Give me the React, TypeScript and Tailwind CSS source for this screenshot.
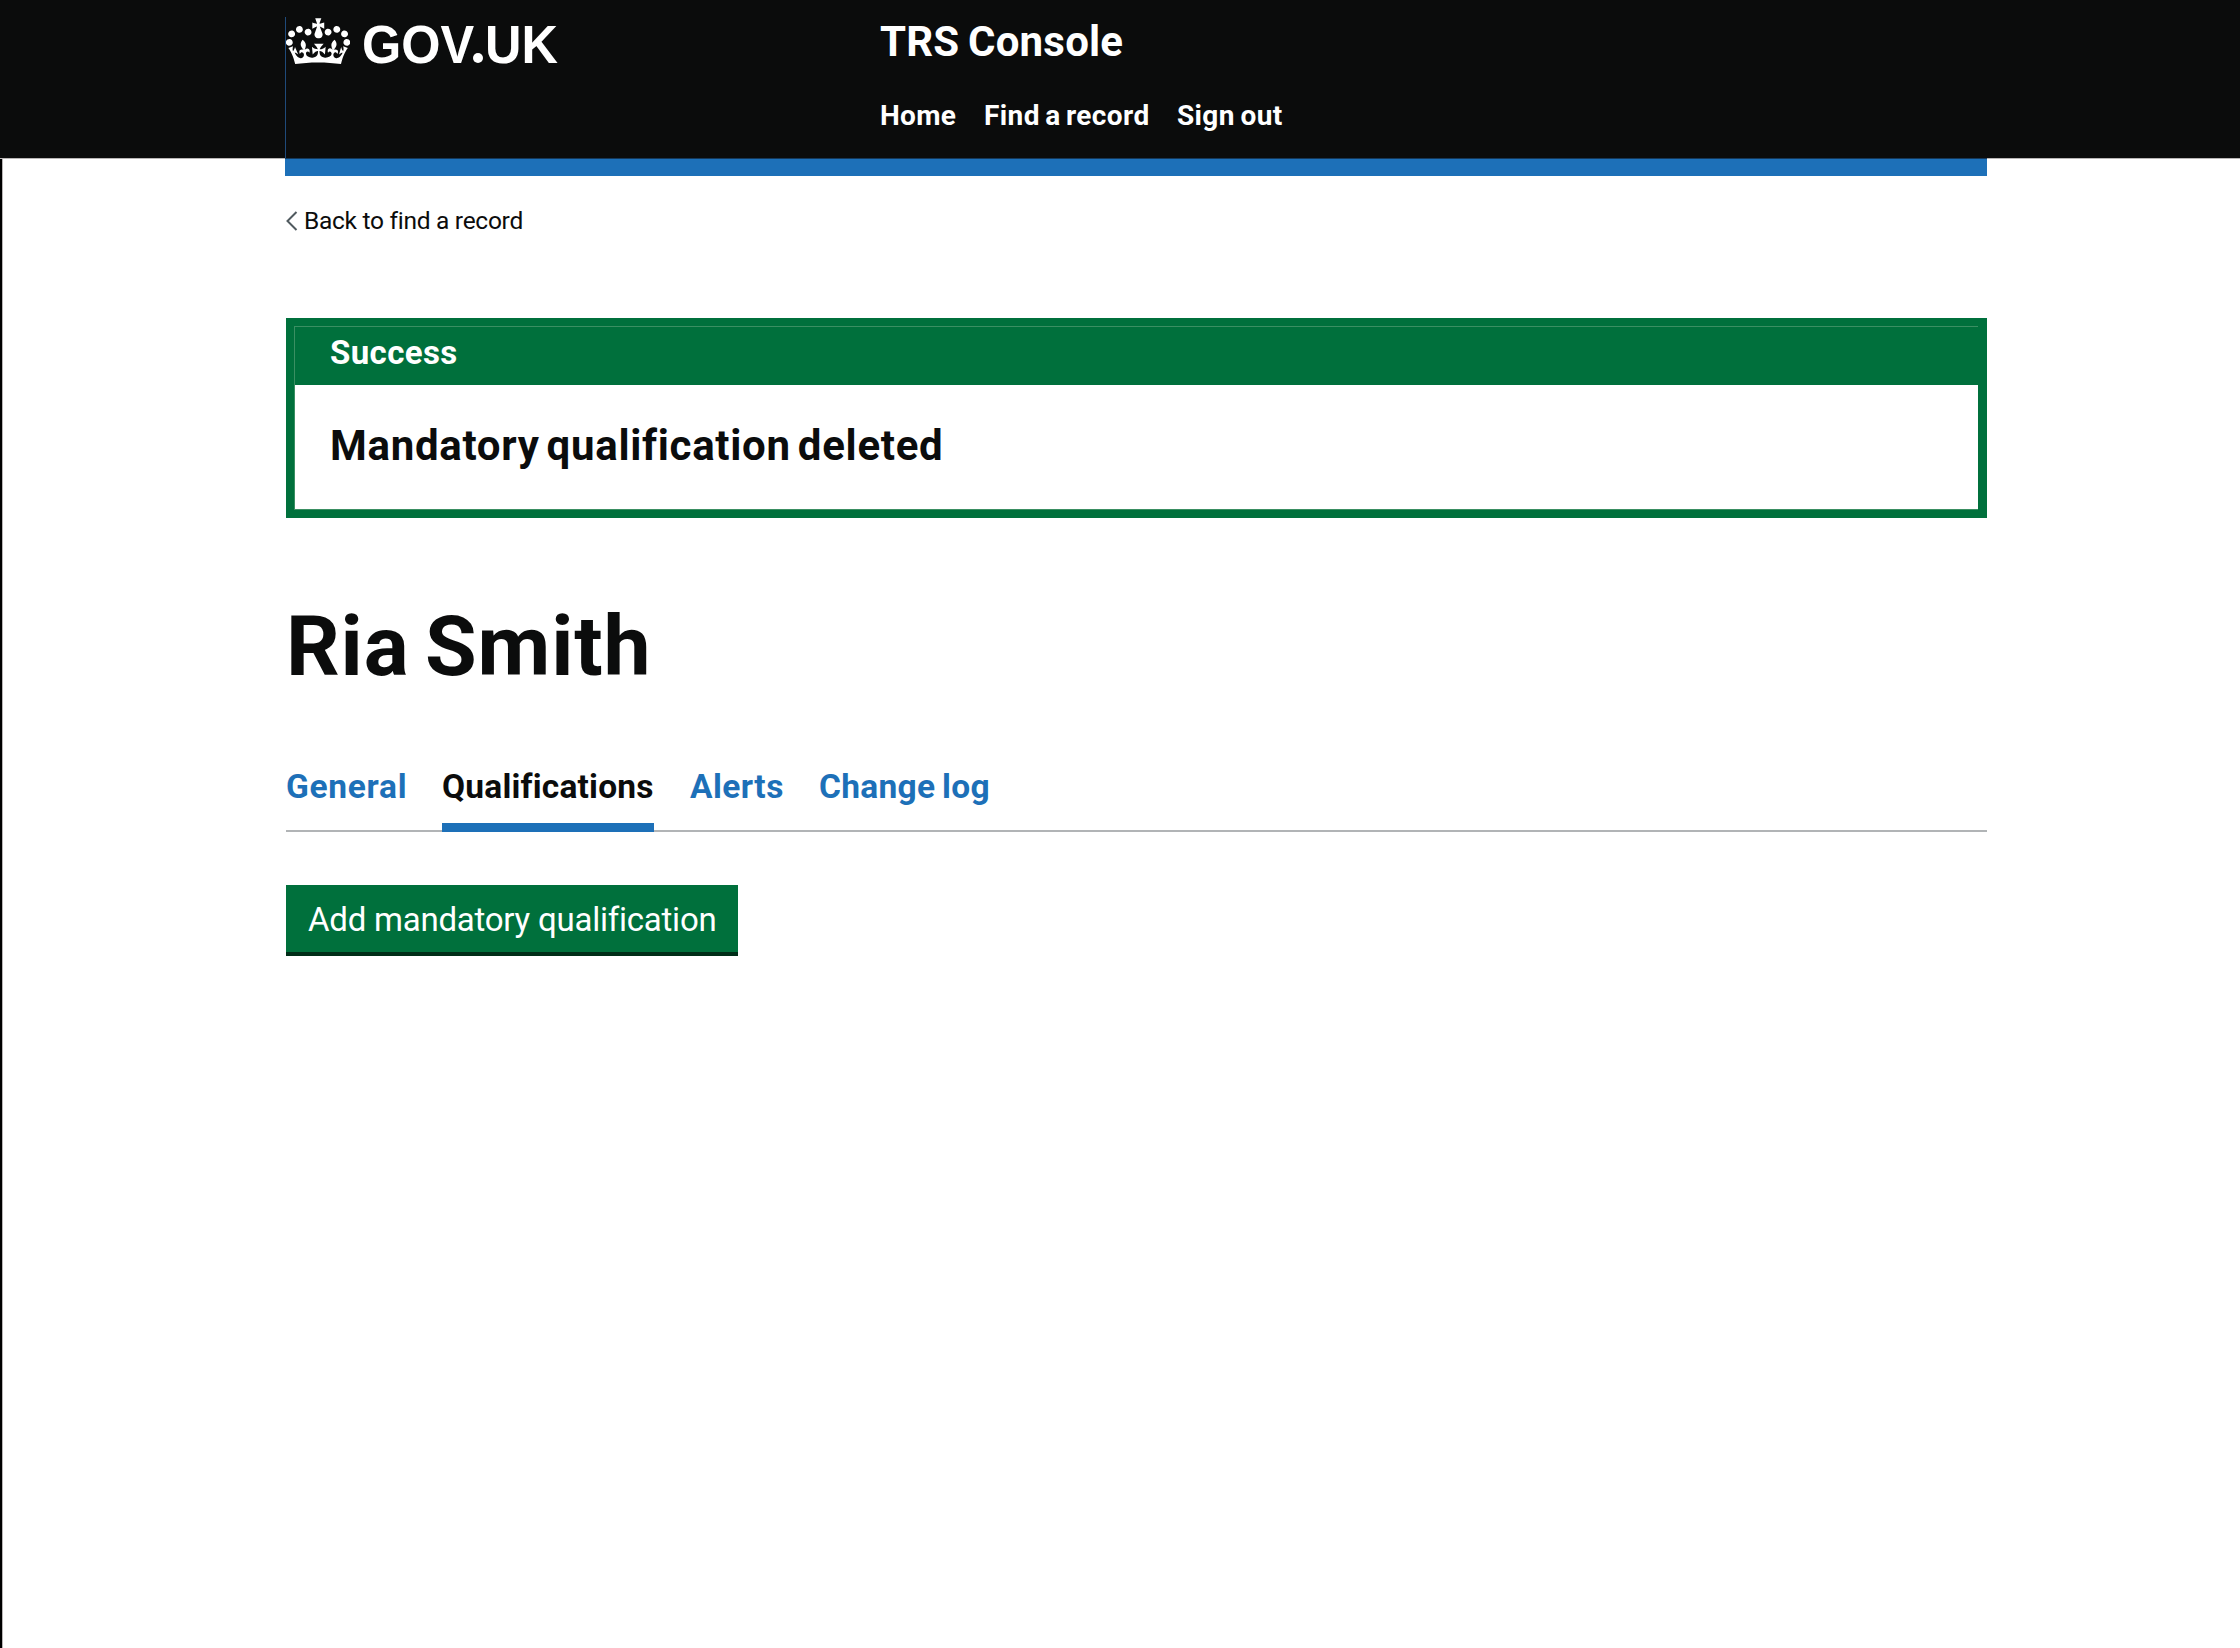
import React from "react";

function Crown() {
  return (
    <svg viewBox="0 4 35.5 26" className="mt-px h-[46px] w-[64px] shrink-0" fill="currentColor" preserveAspectRatio="none" aria-hidden="true">
      <path d="M6.7 12.2c1 .4 2.1-.1 2.5-1s-.1-2.1-1-2.5c-1-.4-2.1.1-2.5 1-.4 1 0 2.1 1 2.5m-4.3 2.5c1 .4 2.1-.1 2.5-1s-.1-2.1-1-2.5c-1-.4-2.1.1-2.5 1-.5 1 0 2.1 1 2.5m-1.3 4.8c1 .4 2.1-.1 2.5-1 .4-1-.1-2.1-1-2.5-1-.4-2.1.1-2.5 1-.4 1 0 2.1 1 2.5m10.4-5.8c1 .4 2.1-.1 2.5-1s-.1-2.1-1-2.5c-1-.4-2.1.1-2.5 1s0 2.1 1 2.5m17.4-1.5c-1 .4-2.1-.1-2.5-1s.1-2.1 1-2.5c1-.4 2.1.1 2.5 1 .5 1 0 2.1-1 2.5m4.3 2.5c-1 .4-2.1-.1-2.5-1s.1-2.1 1-2.5c1-.4 2.1.1 2.5 1 .5 1 0 2.1-1 2.5m1.3 4.8c-1 .4-2.1-.1-2.5-1-.4-1 .1-2.1 1-2.5 1-.4 2.1.1 2.5 1 .4 1 0 2.1-1 2.5m-10.4-5.8c-1 .4-2.1-.1-2.5-1s.1-2.1 1-2.5c1-.4 2.1.1 2.5 1s0 2.1-1 2.5m-5.3-4.9 2.4 1.3V6.5l-2.4.8c-.1-.1-.1-.2-.2-.2s1-3 1-3h-3.4l1 3c-.1.1-.2.1-.2.2-.1.1-2.4-.7-2.4-.7v3.5L17 8.8c.1.1.1.2.2.2l-1.3 3.7c-.1.2-.1.4-.1.6 0 1.1.8 2 1.9 2.2h.7c1.1-.2 1.9-1.1 1.9-2.1 0-.2 0-.4-.1-.6L18.8 9c-.1-.1 0-.1 0-.2m-1.1 20.3c4.7 0 8.9.3 12.8.9 1.1-4.6 2.4-7.2 3.8-9.1l-2.6-.9c.3 1.3.3 1.9 0 2.8-.4-.4-.8-1.2-1.1-2.4l-1.2 4.2c.8-.5 1.3-.9 2-.9-1.2 2.6-2.7 3.2-3.6 3-1.2-.2-1.7-1.3-1.5-2.2.3-1.3 1.6-1.6 2.2-.1 1.2-2.4-.8-3.1-2.1-2.4 1.9-1.9 2.2-3.6.6-5.7-2.2 1.7-2.2 3.3-1.2 5.6-1.3-1.5-3.3-.7-2.5 1.7.9-1.4 2.1-.5 2 .8-.2 1.2-1.7 2.1-3.7 2-2.8-.2-3-2.2-3-3.7.7-.1 1.9.5 3 2l.4-4.4c-1.1 1.2-2.2 1.4-3.3 1.4.4-1.2 2.2-3.1 2.2-3.1h-5.4s1.8 1.9 2.2 3.1c-1.1 0-2.2-.3-3.3-1.4l.4 4.4c1.1-1.5 2.3-2.1 3-2-.1 1.6-.2 3.5-3 3.7-1.9.2-3.5-.8-3.7-2-.2-1.3 1-2.2 1.9-.8.7-2.4-1.3-3.1-2.6-1.7 1-2.3.9-4-1.2-5.6-1.6 2.1-1.3 3.9.6 5.7-1.3-.7-3.2 0-2.1 2.4.6-1.5 1.9-1.1 2.2.1.2.9-.3 1.9-1.5 2.2-.9.2-2.4-.5-3.6-3 .7 0 1.3.3 2 .9L5 20.4c-.3 1.2-.7 1.9-1.1 2.4-.3-.8-.3-1.4 0-2.8l-2.6.9c1.4 1.9 2.7 4.5 3.8 9.1 3.9-.6 8.1-.9 12.6-.9" />
    </svg>
  );
}

function Header() {
  return (
    <header className="-ml-0.5 h-[159px] border-b border-[#b9b6b6] bg-[#0b0c0c] pl-[285px] text-white">
      <div className="flex h-full pt-[17px]">
        <div className="flex w-[595px] items-start border-l border-[#1f4a7a]">
          <Crown />
          <span className="ml-3 mt-[4px] flex font-['Liberation_Sans',Arial,sans-serif] text-[54px] leading-[46px] font-bold">
            <span className="w-[111px] origin-left scale-x-[0.935]">GOV</span>
            <span className="mt-[32px] size-[10px] rounded-full bg-white" />
            <span className="ml-[2px] origin-left scale-x-[0.935]">UK</span>
          </span>
        </div>
        <div>
          <div className="text-[42px] leading-[50px] font-bold tracking-[0.2px] [word-spacing:-2px]">TRS Console</div>
          <nav className="mt-[29px] flex text-[28px] leading-[40px] font-bold whitespace-nowrap">
            <a className="w-[104px] tracking-[0.33px]">Home</a>
            <a className="w-[193px] tracking-[0.4px] [word-spacing:-2px]">Find a record</a>
            <a className="tracking-[0.35px] [word-spacing:-1.5px]">Sign out</a>
          </nav>
        </div>
      </div>
    </header>
  );
}

function Banner() {
  return (
    <section className="mt-[82px] h-[200px] border-8 border-r-9 border-[#00703c]">
      <div className="h-full border border-r-0 border-[#3a8f62]">
        <h2 className="h-[58px] bg-[#00703c] pl-[35px] pt-[6px] text-[33px] leading-[40px] font-bold tracking-[0.4px] text-white">Success</h2>
        <p className="pl-[35px] pt-[36px] text-[42px] leading-[50px] font-bold tracking-[0.7px] [word-spacing:-4px]">Mandatory qualification deleted</p>
      </div>
    </section>
  );
}

function Tabs() {
  return (
    <nav className="mt-[70px] flex h-[65px] gap-9 bg-[linear-gradient(to_top,#b1b4b6_2px,transparent_2px)] text-[33.5px] leading-[40px] font-bold whitespace-nowrap text-[#1d70b8]">
      <a className="w-[120px] tracking-[0.7px]">General</a>
      <a className="w-[212px] border-b-9 border-[#1d70b8] tracking-[0.2px] text-[#0b0c0c]">Qualifications</a>
      <a className="w-[93px] tracking-[0.45px]">Alerts</a>
      <a className="tracking-[0.3px] [word-spacing:-2px]">Change log</a>
    </nav>
  );
}

export default function App() {
  return (
    <div className="min-h-[1648px] border-l-2 border-black bg-white font-[Roboto,sans-serif] text-[#0b0c0c]">
      <Header />
      <div className="min-h-[1489px] border-l border-[#b9b6b6]">
        <div className="ml-[283px] w-[1701px]">
          <div className="relative -ml-px -top-px -mb-px h-[18px] border-t border-[#14395c] bg-[#1d70b8]" />
          <a className="mt-[30px] flex h-[30px] items-center text-[24.5px] leading-[30px] tracking-[-0.28px]">
            <svg viewBox="0 0 12 20" className="h-5 w-3" fill="none" stroke="#505a5f" strokeWidth="2" aria-hidden="true">
              <path d="M10.5 1 1.5 10l9 9" />
            </svg>
            <span className="ml-[6px]">Back to find a record</span>
          </a>
          <Banner />
          <h1 className="mt-[79px] text-[84px] leading-[100px] font-bold tracking-[0.8px] [word-spacing:-6px]">Ria Smith</h1>
          <Tabs />
          <button className="mt-[53px] block h-[71px] w-[452px] border-b-4 border-[#002d18] bg-[#00703c] pb-[12px] pl-[22px] pt-[15px] text-left text-[33px] leading-[40px] tracking-[-0.23px] whitespace-nowrap text-white">
            Add mandatory qualification
          </button>
        </div>
      </div>
    </div>
  );
}
